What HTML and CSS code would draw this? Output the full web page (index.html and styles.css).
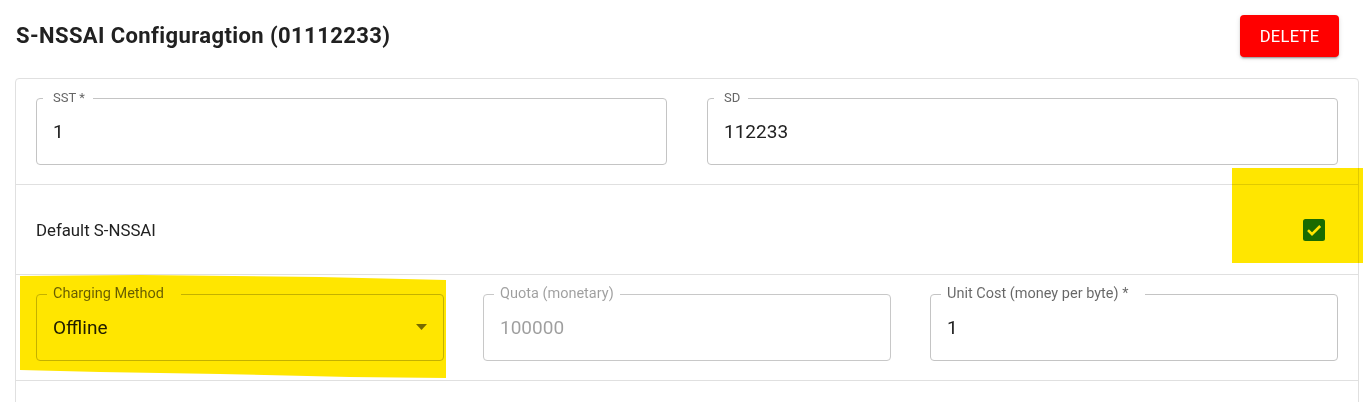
FILE: index.html
```html
<!DOCTYPE html>
<html lang="en">
<head>
<meta charset="utf-8">
<title>S-NSSAI Configuration</title>
<link rel="stylesheet" href="styles.css">
</head>
<body>
<div class="page">
  <header class="head">
    <h2 class="title">S-NSSAI Configuragtion (01112233)</h2>
    <button class="btn-delete" type="button">DELETE</button>
  </header>

  <section class="card">
    <div class="row row-two">
      <fieldset class="field field-sm">
        <legend class="field-label">SST *</legend>
        <div class="field-value">1</div>
      </fieldset>
      <fieldset class="field field-sm">
        <legend class="field-label">SD</legend>
        <div class="field-value">112233</div>
      </fieldset>
    </div>

    <div class="row row-check">
      <span class="check-text">Default S-NSSAI</span>
      <span class="checkbox">
        <svg width="22" height="22" viewBox="0 0 22 22" aria-hidden="true">
          <rect x="0" y="0" width="22" height="22" rx="2.5" fill="#1976d2"/>
          <path d="M5 11.2 L9 15.2 L17.2 7" fill="none" stroke="#fff" stroke-width="2.6"/>
        </svg>
      </span>
    </div>

    <div class="row row-three">
      <fieldset class="field notch-wide">
        <legend class="field-label">Charging Method</legend>
        <div class="field-value">
          <span>Offline</span>
          <svg class="arrow" width="11" height="6" viewBox="0 0 11 6" aria-hidden="true">
            <path d="M0 0 H11 L5.5 6 Z" fill="rgba(0,0,0,0.54)"/>
          </svg>
        </div>
      </fieldset>
      <fieldset class="field field-disabled">
        <legend class="field-label">Quota (monetary)</legend>
        <div class="field-value">100000</div>
      </fieldset>
      <fieldset class="field notch-wide">
        <legend class="field-label">Unit Cost (money per byte) *</legend>
        <div class="field-value">1</div>
      </fieldset>
    </div>

    <div class="row row-empty"></div>
  </section>

  <div class="hl hl-check"></div>
  <svg class="hl hl-charging" width="426" height="104" viewBox="0 0 426 104" aria-hidden="true">
    <polygon points="0,1 120,0 300,2 426,5 426,103 330,102 200,99 80,97 0,95" fill="#ffe600"/>
  </svg>
</div>
</body>
</html>
```

FILE: styles.css
```css
* { box-sizing: border-box; }

html, body {
  margin: 0;
  background: #ffffff;
  font-family: Roboto, "Noto Sans", "Liberation Sans", sans-serif;
  color: rgba(0, 0, 0, 0.87);
}

.page {
  position: relative;
  padding: 0 7px 0 15px;
  overflow: hidden;
  height: 402px;
}

.head {
  display: flex;
  align-items: center;
  justify-content: space-between;
  padding: 15px 20px 0 1px;
  margin-bottom: 21px;
}

.title {
  margin: 0;
  font-size: 22px;
  font-weight: 700;
  letter-spacing: 0.4px;
  line-height: 28px;
  color: #212121;
}

.btn-delete {
  width: 99px;
  height: 42px;
  border: 0;
  border-radius: 4px;
  background: #ff0000;
  color: #ffffff;
  font-family: Roboto, "Noto Sans", sans-serif;
  font-size: 16.5px;
  font-weight: 400;
  letter-spacing: 0.3px;
  box-shadow: 0 3px 1px -2px rgba(0,0,0,0.2), 0 2px 2px 0 rgba(0,0,0,0.14), 0 1px 5px 0 rgba(0,0,0,0.12);
  cursor: pointer;
}

.card {
  border: 1px solid #e0e0e0;
  border-radius: 4px;
}

.row {
  border-bottom: 1px solid #e0e0e0;
}

.row-two {
  display: grid;
  grid-template-columns: 1fr 1fr;
  column-gap: 40px;
  padding: 12px 20px 19px;
}

.row-three {
  display: grid;
  grid-template-columns: 1fr 1fr 1fr;
  column-gap: 39px;
  padding: 12px 20px 19px;
}

.row-check {
  display: flex;
  align-items: center;
  justify-content: space-between;
  height: 90px;
  padding: 0 33px 0 20px;
}

.check-text {
  font-size: 16.8px;
  color: #212121;
}

.checkbox {
  display: flex;
  width: 22px;
  height: 22px;
}

.row-empty {
  height: 60px;
  border-bottom: 0;
}

/* outlined field */
.field {
  margin: 0;
  min-width: 0;
  padding: 0 16px;
  border: 1px solid #c4c4c4;
  border-radius: 4px;
}

.field-label {
  margin-left: -6px;
  padding: 0 6px;
  font-size: 14.5px;
  line-height: 14px;
  color: rgba(0, 0, 0, 0.6);
  white-space: nowrap;
}

.notch-wide .field-label {
  padding-right: 17px;
}

.field-sm .field-label {
  margin-left: -10px;
  padding: 0 8px 0 10px;
  font-size: 13px;
  color: #666666;
}

.field-value {
  display: flex;
  align-items: center;
  height: 59px;
  padding-bottom: 7px;
  font-size: 19px;
  color: #212121;
}

.arrow {
  margin-left: auto;
  margin-right: 0;
}

.field-disabled {
  border-color: #c8c8c8;
}

.field-disabled .field-label,
.field-disabled .field-value {
  color: rgba(0, 0, 0, 0.38);
}

/* annotation highlights laid over the screenshot */
.hl {
  position: absolute;
  mix-blend-mode: multiply;
  pointer-events: none;
}

.hl-check {
  left: 1232px;
  top: 168px;
  width: 131px;
  height: 95px;
  background: #ffe600;
}

.hl-charging {
  left: 20px;
  top: 275px;
}
```
